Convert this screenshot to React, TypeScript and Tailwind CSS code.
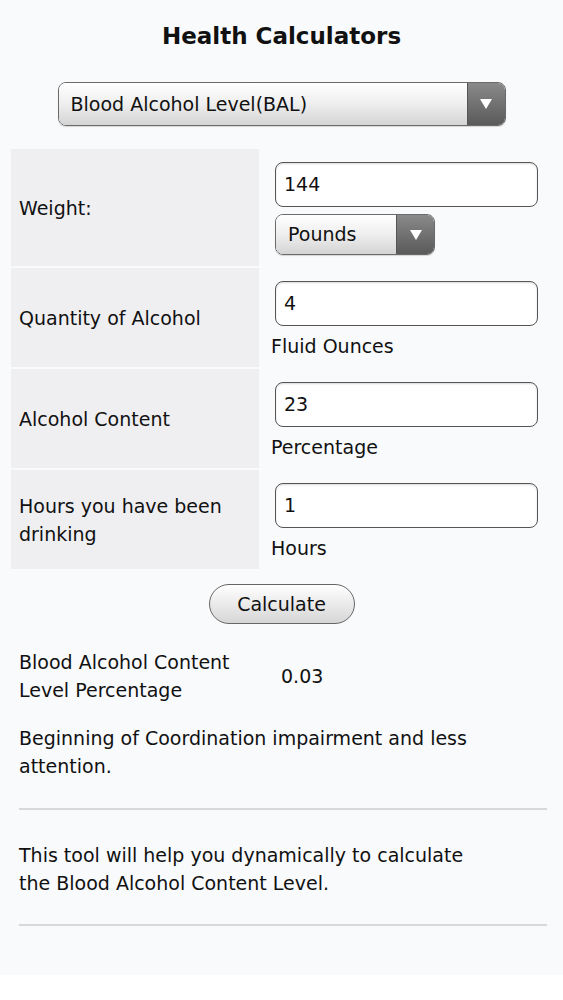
import React from "react";

const Arrow = () => (
  <svg width="14" height="12" viewBox="0 0 14 12">
    <path d="M1 1 L13 1 L7 11 Z" fill="#fff" />
  </svg>
);

type SelectProps = { label: string; className: string };

const FakeSelect = ({ label, className }: SelectProps) => (
  <div
    className={`flex items-stretch rounded-[8px] border border-[#6b6b6b] overflow-hidden shadow-[0_1px_1px_rgba(0,0,0,0.15)] ${className}`}
  >
    <div className="flex-1 flex items-center pl-3 bg-gradient-to-b from-[#ffffff] via-[#eeeeee] to-[#d4d4d4] text-[#111]">
      {label}
    </div>
    <div className="w-[38px] flex items-center justify-center bg-gradient-to-b from-[#8a8a8a] to-[#5a5a5a] border-l border-[#555]">
      <Arrow />
    </div>
  </div>
);

type RowProps = {
  label: React.ReactNode;
  value: string;
  unit?: string;
  children?: React.ReactNode;
  h: string;
};

const Row = ({ label, value, unit, children, h }: RowProps) => (
  <div className={`flex ${h}`}>
    <div className="w-[248px] bg-[#efeff1] flex items-center pl-2 pr-2 leading-[28px]">
      {label}
    </div>
    <div className="flex-1 pl-4 pt-[13px]">
      <div className="h-[45px] w-[263px] rounded-[8px] border-[1.5px] border-[#555] bg-white flex items-center pl-2 shadow-[inset_0_1px_2px_rgba(0,0,0,0.15)]">
        {value}
      </div>
      {unit && <div className="-ml-1 mt-[6px] leading-[28px]">{unit}</div>}
      {children}
    </div>
  </div>
);

export default function App() {
  return (
    <div
      className="min-h-[975px] bg-[#f8fafc] text-[#111] text-[19px] pb-10"
      style={{ fontFamily: '"DejaVu Sans", Verdana, sans-serif' }}
    >
      <h1 className="text-center font-bold text-[23px] pt-[20px] leading-[32px]">
        Health Calculators
      </h1>
      <div className="flex justify-center mt-[30px]">
        <FakeSelect label="Blood Alcohol Level(BAL)" className="w-[448px] h-[44px]" />
      </div>

      <div className="mx-[11px] mt-[23px] flex flex-col gap-[2px] w-[528px]">
        <Row label="Weight:" value="144" h="h-[117px]">
          <FakeSelect label="Pounds" className="w-[160px] h-[41px] mt-[7px]" />
        </Row>
        <Row label="Quantity of Alcohol" value="4" unit="Fluid Ounces" h="h-[99px]" />
        <Row label="Alcohol Content" value="23" unit="Percentage" h="h-[99px]" />
        <Row
          label={<span>Hours you have been<br />drinking</span>}
          value="1"
          unit="Hours"
          h="h-[99px]"
        />
      </div>

      <div className="flex justify-center mt-[15px]">
        <button className="w-[146px] h-[40px] rounded-full border border-[#666] bg-gradient-to-b from-[#ffffff] to-[#d6d6d6] text-[19px]">
          Calculate
        </button>
      </div>

      <div className="pl-[19px] pr-[16px] mt-[24px]">
        <div className="flex items-center leading-[28px]">
          <div className="w-[262px]">
            Blood Alcohol Content
            <br />
            Level Percentage
          </div>
          <div>0.03</div>
        </div>
        <p className="mt-[20px] leading-[28px]">
          Beginning of Coordination impairment and less
          <br />
          attention.
        </p>
        <hr className="mt-[28px] border-t-2 border-[#d6d8da]" />
        <p className="mt-[31px] leading-[28px]">
          This tool will help you dynamically to calculate
          <br />
          the Blood Alcohol Content Level.
        </p>
        <hr className="mt-[27px] border-t-2 border-[#d6d8da]" />
      </div>
    </div>
  );
}
